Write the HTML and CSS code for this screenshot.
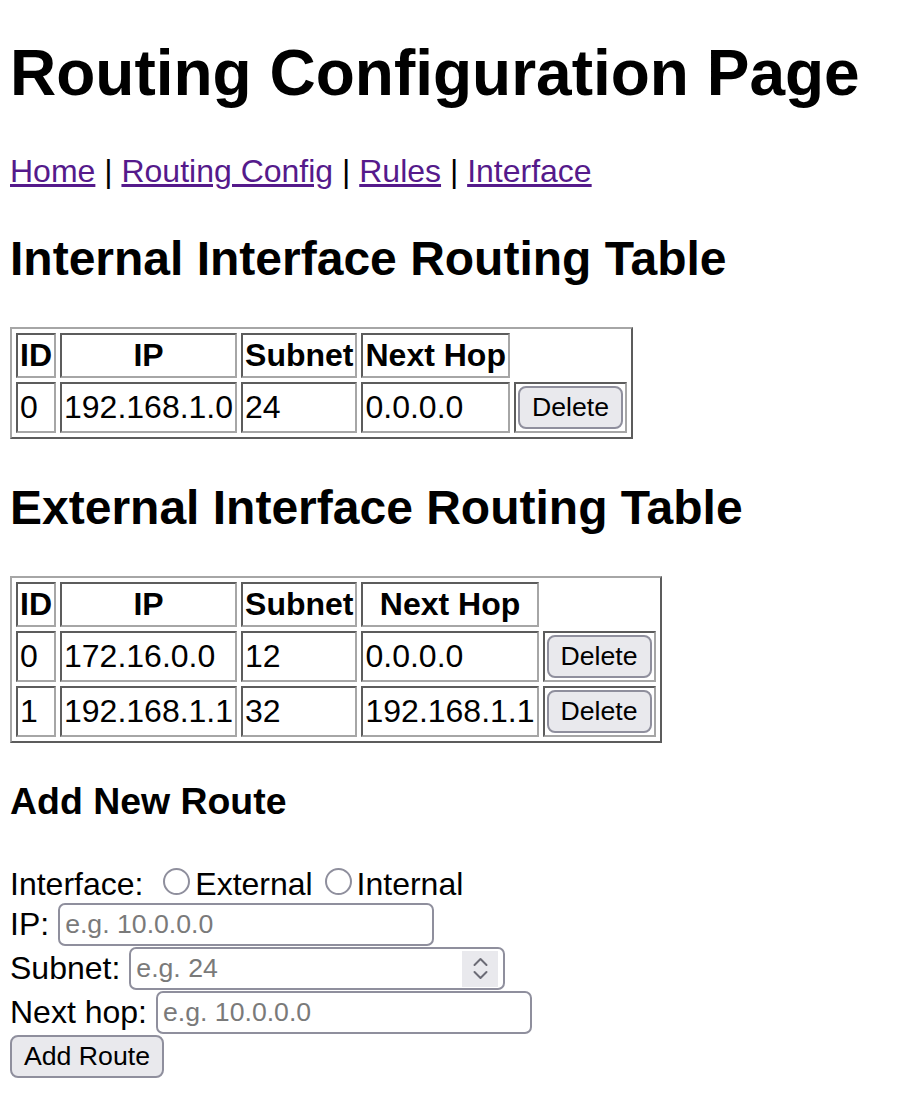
FILE: index.html
```html
<!DOCTYPE html>
<html lang="en">
<head>
<meta charset="utf-8">
<title>Routing Configuration Page</title>
<link rel="stylesheet" href="styles.css">
</head>
<body class="page">
<h1 class="title">Routing Configuration Page</h1>
<p class="nav"><a href="#" class="nav-link">Home</a> | <a href="#" class="nav-link">Routing Config</a> | <a href="#" class="nav-link">Rules</a> | <a href="#" class="nav-link">Interface</a></p>

<h2 class="section-title">Internal Interface Routing Table</h2>
<table class="route-table">
  <tr><th class="cell head">ID</th><th class="cell head">IP</th><th class="cell head">Subnet</th><th class="cell head">Next Hop</th></tr>
  <tr><td class="cell">0</td><td class="cell">192.168.1.0</td><td class="cell">24</td><td class="cell">0.0.0.0</td><td class="cell"><button type="button" class="btn">Delete</button></td></tr>
</table>

<h2 class="section-title">External Interface Routing Table</h2>
<table class="route-table">
  <tr><th class="cell head">ID</th><th class="cell head">IP</th><th class="cell head">Subnet</th><th class="cell head">Next Hop</th></tr>
  <tr><td class="cell">0</td><td class="cell">172.16.0.0</td><td class="cell">12</td><td class="cell">0.0.0.0</td><td class="cell"><button type="button" class="btn">Delete</button></td></tr>
  <tr><td class="cell">1</td><td class="cell">192.168.1.1</td><td class="cell">32</td><td class="cell">192.168.1.1</td><td class="cell"><button type="button" class="btn">Delete</button></td></tr>
</table>

<h3 class="form-title">Add New Route</h3>
<form class="route-form">
  <div class="radio-row"><span class="radio-caption">Interface:</span> <label class="radio-option"><input type="radio" name="iface" class="radio">External</label> <label class="radio-option"><input type="radio" name="iface" class="radio">Internal</label></div>
  <div class="field-row"><label class="field-label">IP:</label><input type="text" class="field" placeholder="e.g. 10.0.0.0"></div>
  <div class="field-row"><label class="field-label">Subnet:</label><span class="number-wrap"><input type="number" class="field field-number" placeholder="e.g. 24"><span class="spinner"><svg width="36" height="36" viewBox="0 0 36 36"><path d="M12.5 14 L18.5 8 L24.5 14" fill="none" stroke="#6b6b75" stroke-width="2" stroke-linecap="round" stroke-linejoin="round"/><path d="M12.5 21 L18.5 27 L24.5 21" fill="none" stroke="#6b6b75" stroke-width="2" stroke-linecap="round" stroke-linejoin="round"/></svg></span></span></div>
  <div class="field-row"><label class="field-label">Next hop:</label><input type="text" class="field" placeholder="e.g. 10.0.0.0"></div>
  <div class="button-row"><button type="button" class="btn">Add Route</button></div>
</form>
</body>
</html>
```

FILE: styles.css
```css
html {
  background: #fff;
}

.page {
  margin: 0 10px;
  font-family: "Liberation Sans", Arial, sans-serif;
  font-size: 32px;
  color: #000;
}

.title {
  font-size: 64px;
  font-weight: bold;
  margin: 36px 0 42.88px;
}

.nav {
  margin: 32px 0;
}

.nav-link {
  color: #551a8b;
  text-decoration: underline;
}

.section-title {
  font-size: 48px;
  font-weight: bold;
  margin: 41px 0 41px;
}

.route-table {
  border-collapse: separate;
  border-spacing: 4px;
  border: 2px solid;
  border-color: #a6a6a6 #5c5c5c #5c5c5c #a6a6a6;
}

.cell {
  border: 2px solid;
  border-color: #5c5c5c #a6a6a6 #a6a6a6 #5c5c5c;
  padding: 2px;
  text-align: left;
  vertical-align: middle;
  font-weight: normal;
}

.cell.head {
  font-weight: bold;
  text-align: center;
}

.btn {
  box-sizing: border-box;
  height: 43px;
  padding: 0 12px;
  margin: 0;
  font-family: "Liberation Sans", Arial, sans-serif;
  font-size: 26.67px;
  color: #000;
  background: #e9e9ed;
  border: 2px solid #8f8f9d;
  border-radius: 8px;
}

.form-title {
  font-size: 37.44px;
  font-weight: bold;
  margin: 37.44px 0;
}

.route-form {
  margin: 0;
}

.radio-caption {
  margin-right: 8px;
}

.radio {
  -webkit-appearance: none;
  appearance: none;
  box-sizing: border-box;
  width: 27px;
  height: 27px;
  margin: 7px 5px 0 3px;
  border: 2px solid #8f8f9d;
  border-radius: 50%;
  background: #fff;
  vertical-align: baseline;
}

.field-row {
  display: flex;
  align-items: center;
  gap: 9px;
  height: 44px;
}

.field-label {
  white-space: nowrap;
}

.field {
  box-sizing: border-box;
  width: 376px;
  height: 43px;
  margin: 0;
  padding: 0 5px;
  font-family: "Liberation Sans", Arial, sans-serif;
  font-size: 26.67px;
  color: #000;
  background: #fff;
  border: 2px solid #8f8f9d;
  border-radius: 7px;
  display: block;
}

.field::placeholder {
  color: #7a7a7a;
}

.field-number {
  -moz-appearance: textfield;
  appearance: textfield;
}

.field-number::-webkit-inner-spin-button,
.field-number::-webkit-outer-spin-button {
  -webkit-appearance: none;
  margin: 0;
}

.number-wrap {
  position: relative;
  display: block;
}

.spinner {
  position: absolute;
  top: 4px;
  right: 7px;
  width: 36px;
  height: 36px;
  background: #e9e9ed;
  display: block;
}

.spinner svg {
  display: block;
}

.button-row {
  margin: 0;
}
```
